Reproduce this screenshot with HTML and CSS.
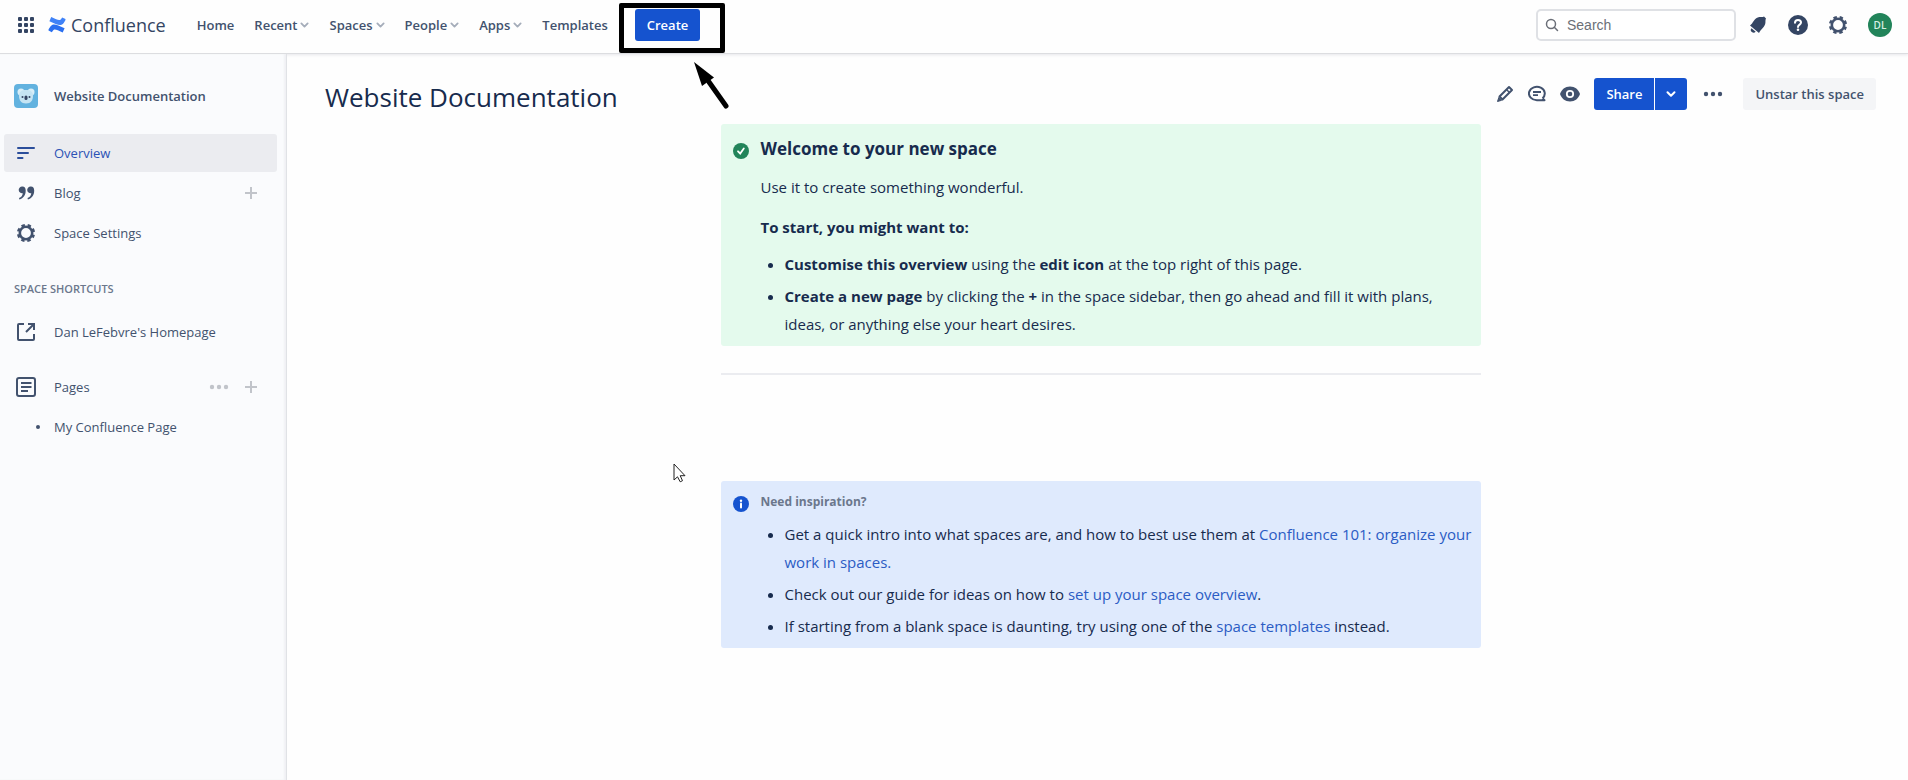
FILE: index.html
```html
<!DOCTYPE html>
<html lang="en">
<head>
<meta charset="utf-8">
<title>Website Documentation - Confluence</title>
<link rel="stylesheet" href="styles.css">
</head>
<body>
<svg class="defs" aria-hidden="true">
  <symbol id="chevron" viewBox="0 0 10 10"><path d="M1.5 3.2 5 6.8 8.500 3.200" fill="none" stroke="currentColor" stroke-width="2" stroke-linecap="round" stroke-linejoin="round"/></symbol>
  <symbol id="gear" viewBox="0 0 20 20"><circle cx="10" cy="10" r="6.200" fill="none" stroke="currentColor" stroke-width="2.600"/><circle cx="10" cy="10" r="7.700" fill="none" stroke="currentColor" stroke-width="2.800" stroke-dasharray="3.400 2.647" stroke-dashoffset="1.700" transform="rotate(22.500 10 10)"/></symbol>
  <symbol id="plus" viewBox="0 0 12 12"><path d="M6 0v12M0 6h12" stroke="currentColor" stroke-width="2"/></symbol>
  <symbol id="dots" viewBox="0 0 20 6"><g fill="currentColor"><circle cx="3" cy="3" r="2.200"/><circle cx="10" cy="3" r="2.200"/><circle cx="17" cy="3" r="2.200"/></g></symbol>
</svg>
<header class="topbar">
  <button class="icon-btn switcher" aria-label="Switch to">
    <svg width="18" height="18" viewBox="0 0 18 18" fill="#344563"><rect x="1" y="1" width="4" height="4" rx="1"/><rect x="7" y="1" width="4" height="4" rx="1"/><rect x="13" y="1" width="4" height="4" rx="1"/><rect x="1" y="7" width="4" height="4" rx="1"/><rect x="7" y="7" width="4" height="4" rx="1"/><rect x="13" y="7" width="4" height="4" rx="1"/><rect x="1" y="13" width="4" height="4" rx="1"/><rect x="7" y="13" width="4" height="4" rx="1"/><rect x="13" y="13" width="4" height="4" rx="1"/></svg>
  </button>
  <a class="brand" href="#">
    <svg width="18" height="18" viewBox="0 0 18 18"><path d="M.6 13.200 2.400 10.500C5 6.900 8.200 8.200 16.600 12.200L14.700 16.600C8 13.500 6.200 12.300 4.500 15.200L3.900 16.200.5 14.500Z" fill="#2a6ff0"/><path d="M17.400 4.300 15.700 7C13 10.600 9.800 9.300 1.400 5.300L3.200 1C10 4.200 11.800 5.200 13.500 2.400L14.100 1.400 17.500 3Z" fill="#3f82f7"/></svg>
    <span>Confluence</span>
  </a>
  <nav class="nav" aria-label="Main">
    <a href="#">Home</a>
    <button>Recent<svg><use href="#chevron"/></svg></button>
    <button>Spaces<svg><use href="#chevron"/></svg></button>
    <button>People<svg><use href="#chevron"/></svg></button>
    <button>Apps<svg><use href="#chevron"/></svg></button>
    <a href="#">Templates</a>
  </nav>
  <div class="create">
    <button class="primary">Create</button>
    <div class="highlight"></div>
    <svg class="arrow" width="40" height="50" viewBox="0 0 40 50"><path d="M17 20 34 44" stroke="#000" stroke-width="5" stroke-linecap="round"/><path d="M2 0 22 15.500 10 24Z"/></svg>
  </div>
  <label class="search">
    <svg width="14" height="14" viewBox="0 0 14 14" fill="none" stroke="#6b6f78" stroke-width="1.500"><circle cx="6" cy="6" r="4.500"/><path d="m9.300 9.300 3.200 3.200" stroke-linecap="round"/></svg>
    <input type="text" placeholder="Search" aria-label="Search">
  </label>
  <div class="tools">
    <button class="icon-btn" aria-label="Notifications"><svg width="20" height="20" viewBox="0 0 20 20" fill="#344563"><path d="M2 10.500C5 8.200 6.500 3 10.500 2.200 12.500 1.700 14.300 2.600 16 1.500L18 3.500C17 5.200 17.800 7 17.200 9 16 13 12.800 14 11 18Z"/><path d="M3.500 13.200a2.600 2.600 0 0 0 4.200 3.500Z"/></svg></button>
    <button class="icon-btn" aria-label="Help"><svg width="20" height="20" viewBox="0 0 20 20"><circle cx="10" cy="10" r="10" fill="#344563"/><path d="M7 7.800C7 5.800 8.300 5 10 5s3 1 3 2.600c0 2-3 2-3 4.400" fill="none" stroke="#fff" stroke-width="2" stroke-linecap="round"/><circle cx="10" cy="14.800" r="1.300" fill="#fff"/></svg></button>
    <button class="icon-btn" aria-label="Settings"><svg width="20" height="20"><use href="#gear"/></svg></button>
  </div>
  <button class="avatar" aria-label="Your profile">DL</button>
</header>
<div class="body">
  <aside class="sidebar">
    <a class="space" href="#">
      <svg width="24" height="24" viewBox="0 0 24 24"><rect width="24" height="24" rx="4" fill="#62b2df"/><circle cx="7" cy="8" r="3.500" fill="#d8eef8"/><circle cx="17" cy="8" r="3.500" fill="#d8eef8"/><path d="M5 12C5 7 8 6 12 6s7 1 7 6c0 4-2 7.500-7 7.500S5 16 5 12Z" fill="#c5e4f3"/><circle cx="8.500" cy="13" r="1" fill="#344563"/><circle cx="15.500" cy="13" r="1" fill="#344563"/><rect x="10.500" y="11.500" width="3" height="4.500" rx="1.500" fill="#344563"/></svg>
      <span>Website Documentation</span>
    </a>
    <nav class="menu" aria-label="Space">
      <div class="row active"><a href="#"><svg width="20" height="20" viewBox="0 0 20 20" stroke="#2b4e9b" stroke-width="2" stroke-linecap="round"><path d="M2 5h16M2 10h10M2 15h4.500"/></svg>Overview</a></div>
      <div class="row"><a href="#"><svg width="20" height="20" viewBox="0 0 20 20" fill="#42526e"><path id="q" d="M6.500 3.500a3.400 3.400 0 1 0 .3 6.700C6.500 12.500 5.500 14 3 15l.4 1.400C7.500 15.500 9.700 12 9.700 7.500 9.700 5 8.500 3.500 6.500 3.500Z"/><use href="#q" x="8.500"/></svg>Blog</a><button class="icon-btn faint" aria-label="Create blog post"><svg width="12" height="12"><use href="#plus"/></svg></button></div>
      <div class="row"><a href="#"><svg width="20" height="20"><use href="#gear"/></svg>Space Settings</a></div>
    </nav>
    <h2 class="group">SPACE SHORTCUTS</h2>
    <div class="row"><a href="#"><svg width="20" height="20" viewBox="0 0 20 20" fill="none" stroke="#42526e" stroke-width="2"><path d="M8 2H3a1 1 0 0 0-1 1v14a1 1 0 0 0 1 1h14a1 1 0 0 0 1-1v-5M12 2h6v6M18 2l-8 8"/></svg>Dan LeFebvre's Homepage</a></div>
    <nav class="pages" aria-label="Pages">
      <div class="row"><a href="#"><svg width="20" height="20" viewBox="0 0 20 20" fill="none" stroke="#42526e" stroke-width="2"><rect x="1" y="1" width="18" height="18" rx="2"/><path d="M5 6h10.500M5 10h10.500M5 14h7"/></svg>Pages</a><button class="icon-btn faint" aria-label="More"><svg width="20" height="6"><use href="#dots"/></svg></button><button class="icon-btn faint" aria-label="Create page"><svg width="12" height="12"><use href="#plus"/></svg></button></div>
      <div class="row child"><a href="#"><i class="dot"></i>My Confluence Page</a></div>
    </nav>
  </aside>
  <main class="main">
    <div class="page-head">
      <h1>Website Documentation</h1>
      <div class="actions">
        <button class="icon-btn" aria-label="Edit"><svg width="18" height="18" viewBox="0 0 18 18" fill="none" stroke="#42526e" stroke-width="2" stroke-linejoin="round"><path d="m3.500 11.500 9.500-9.500L16 5l-9.500 9.500Z"/><path d="m10.500 4.500 3 3" stroke-width="1.500"/><path d="m2.800 12.500 2.800 2.800L1.500 16.500Z" fill="#42526e" stroke-width="1"/></svg></button>
        <button class="icon-btn" aria-label="Comments"><svg width="18" height="18" viewBox="0 0 18 18" fill="none" stroke="#42526e" stroke-width="2"><path d="M14.500 13.200A7.900 6.700 0 1 0 9 15.200H16.500L14.500 13.200" stroke-linejoin="round"/><path d="M5 7h8M5 10.200h5" stroke-width="1.800"/></svg></button>
        <button class="icon-btn" aria-label="Watch"><svg width="20" height="18" viewBox="0 0 20 18"><path d="M10 1.500c5 0 8.500 3 10 7.500-1.500 4.500-5 7.500-10 7.500S1.500 13.500 0 9C1.500 4.500 5 1.500 10 1.500Z" fill="#42526e"/><circle cx="10" cy="9" r="3.200" fill="none" stroke="#fff" stroke-width="1.800"/></svg></button>
        <div class="split"><button class="primary">Share</button><button class="primary caret" aria-label="Share options"><svg width="10" height="10"><use href="#chevron"/></svg></button></div>
        <button class="icon-btn more" aria-label="More actions"><svg width="20" height="6"><use href="#dots"/></svg></button>
        <button class="unstar">Unstar this space</button>
      </div>
    </div>
    <article class="content">
      <section class="panel success">
        <svg class="mark" width="16" height="16" viewBox="0 0 16 16"><circle cx="8" cy="8" r="8" fill="#22845a"/><path d="m5 8.300 2.200 2.200L10.800 5.500" fill="none" stroke="#fff" stroke-width="1.800" stroke-linecap="round"/></svg>
        <div>
          <h3>Welcome to your new space</h3>
          <p>Use it to create something wonderful.</p>
          <p><strong>To start, you might want to:</strong></p>
          <ul>
            <li><strong>Customise this overview</strong> using the <strong>edit icon</strong> at the top right of this page.</li>
            <li><strong>Create a new page</strong> by clicking the <strong>+</strong> in the space sidebar, then go ahead and fill it with plans, ideas, or anything else your heart desires.</li>
          </ul>
        </div>
      </section>
      <hr>
      <section class="panel info">
        <svg class="mark" width="16" height="16" viewBox="0 0 16 16"><circle cx="8" cy="8" r="8" fill="#1553cf"/><circle cx="8" cy="4.800" r="1.200" fill="#fff"/><path d="M8 7.500v4" stroke="#fff" stroke-width="2" stroke-linecap="round"/></svg>
        <div>
          <h4>Need inspiration?</h4>
          <ul>
            <li>Get a quick intro into what spaces are, and how to best use them at <a href="#">Confluence 101: organize your work in spaces.</a></li>
            <li>Check out our guide for ideas on how to <a href="#">set up your space overview</a>.</li>
            <li>If starting from a blank space is daunting, try using one of the <a href="#">space templates</a> instead.</li>
          </ul>
        </div>
      </section>
    </article>
  </main>
</div>
<svg class="cursor" width="14" height="20" viewBox="0 0 14 20"><path d="M1 1v16l3.500-3.200 2.700 5 2.300-1.100L7.200 12.700H12Z" fill="#fff" stroke="#222" stroke-width="1"/></svg>
</body>
</html>
```
FILE: styles.css
```css
* { box-sizing: border-box; }
body {
  margin: 0;
  min-height: 100vh;
  display: flex;
  flex-direction: column;
  background: #fefefe;
  color: #172b4d;
  font: 13px/20px "Open Sans", "Noto Sans", sans-serif;
}
button, input { font: inherit; color: inherit; }
button { border: 0; padding: 0; background: none; cursor: pointer; }
a { color: inherit; text-decoration: none; }
h1, h2, h3, h4, p, ul { margin: 0; }
svg { display: block; flex: none; }
.defs { position: absolute; width: 0; height: 0; }
.icon-btn { display: flex; align-items: center; justify-content: center; color: #42526e; }

.topbar {
  display: flex;
  align-items: center;
  height: 54px;
  padding: 0 16px 4px 17px;
  border-bottom: 1px solid #dcdde0;
  box-shadow: 0 1px 3px #e6e6ea;
}
.brand { display: flex; align-items: center; gap: 5px; margin-left: 13px; color: #344563; font-size: 18px; line-height: 24px; }
.nav { display: flex; gap: 20px; margin-left: 31px; color: #42526e; font-weight: 600; }
.nav button { display: flex; align-items: center; gap: 3px; }
.nav svg { width: 9px; height: 10px; color: #a5adba; }
.create { position: relative; margin-left: 27px; }
.primary {
  height: 32px;
  padding: 0 12px;
  border-radius: 3px;
  background: #1553cf;
  color: #fff;
  font-weight: 600;
}
.highlight { position: absolute; inset: -6px -25px -12px -16px; border: 5px solid #000; border-radius: 2px; pointer-events: none; }
.arrow { position: absolute; left: 57px; top: 53px; }
.search {
  display: flex;
  align-items: center;
  gap: 8px;
  width: 200px;
  height: 32px;
  margin-left: auto;
  padding: 0 7px;
  border: 2px solid #dfe1e5;
  border-radius: 5px;
  background: #fff;
}
.search input { flex: 1; min-width: 0; border: 0; padding: 0; background: none; outline: 0; font: 14px/20px "Liberation Sans", sans-serif; }
.search input::placeholder { color: #6b6f78; opacity: 1; }
.tools { display: flex; gap: 20px; margin-left: 12px; }
.avatar { width: 24px; height: 24px; margin-left: 20px; border-radius: 50%; background: #22845a; color: #d8efe4; font-size: 10px; font-weight: 600; }

.body { display: flex; flex: 1; }
.sidebar { flex: none; width: 287px; padding: 30px 9px 0 4px; border-right: 1px solid #e0e2e6; box-shadow: inset -2px 0 2px #f0f1f4; background: #fafbfd; color: #42526e; }
.space { display: flex; align-items: center; gap: 16px; height: 24px; padding-left: 10px; font-weight: 600; }
.menu { display: flex; flex-direction: column; gap: 2px; margin-top: 26px; }
.row { display: flex; align-items: center; gap: 16px; height: 38px; padding: 0 20px 0 12px; border-radius: 3px; }
.row a { flex: 1; display: flex; align-items: center; gap: 18px; }
.active { background: #ebecf0; color: #2b52b5; }
.faint { color: #c1c4ca; }
.group { margin: 27px 0 14px 10px; color: #6b778c; font-size: 11px; line-height: 20px; font-weight: 600; }
.pages { display: flex; flex-direction: column; gap: 2px; margin-top: 17px; }
.dot { flex: none; width: 4px; height: 4px; margin-left: 20px; border-radius: 50%; background: #42526e; }
.child a { gap: 14px; }

.main { flex: 1; min-width: 0; padding: 24px 32px 24px 38px; }
.page-head { display: flex; justify-content: space-between; align-items: flex-start; }
h1 { font-size: 26px; line-height: 38px; font-weight: 400; }
.actions { display: flex; align-items: center; gap: 14px; }
.split { display: flex; gap: 1px; }
.split .primary:first-child { border-radius: 3px 0 0 3px; }
.caret { border-radius: 0 3px 3px 0; padding: 0 11px; }
.more { margin-left: 2px; }
.unstar { height: 32px; margin-left: 6px; padding: 0 12px; border-radius: 3px; background: #f4f5f7; color: #42526e; font-weight: 600; }
.content { max-width: 760px; margin: 8px auto 0; font-size: 15px; line-height: 28px; }
.panel { display: flex; gap: 12px; padding: 0 8px 8px 12px; border-radius: 3px; }
.success { background: #e4faed; padding-top: 13px; }
.info { background: #dfeafd; padding-top: 9px; }
.mark { margin-top: 6px; }
.panel h3 { font-size: 17px; line-height: 24px; font-weight: 700; }
.panel h4 { font-size: 12px; line-height: 24px; font-weight: 700; color: #6b778c; }
.panel p { margin-top: 12px; }
.panel strong { font-weight: 700; }
.panel ul { margin-top: 9px; padding-left: 24px; }
.info ul { margin-top: 6px; }
.panel li + li { margin-top: 4px; }
.panel li a { color: #2b5cc4; }
hr { height: 2px; margin: 27px 0 106px; border: 0; background: #ebecf0; }
.cursor { position: absolute; left: 673px; top: 463px; }
```
